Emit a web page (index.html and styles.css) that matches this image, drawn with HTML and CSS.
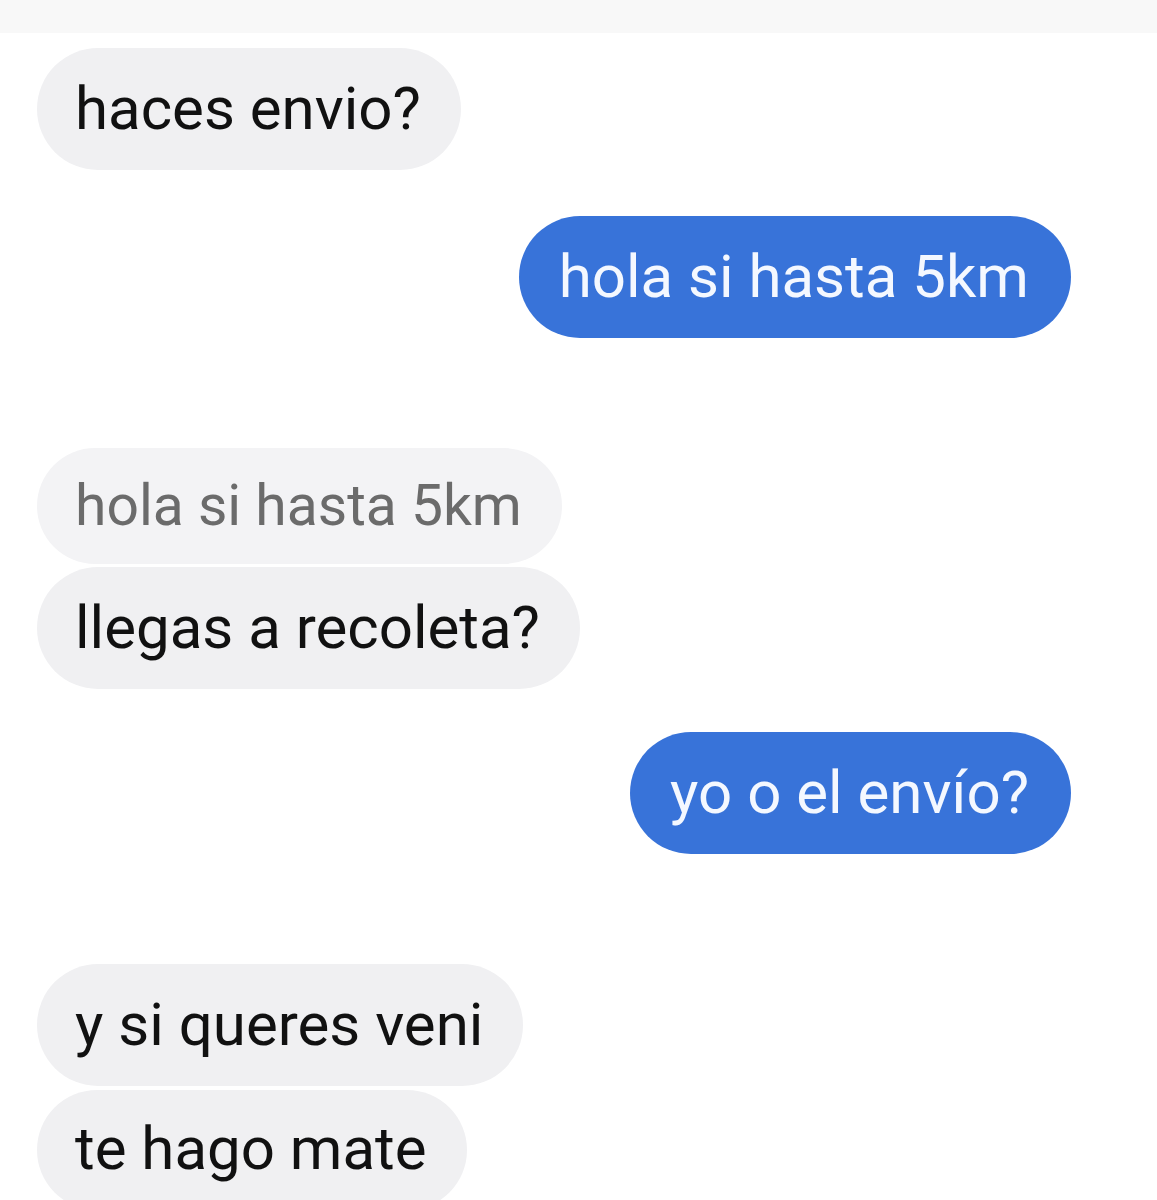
FILE: index.html
```html
<!doctype html>
<html>
<head lang='es'>
  <meta charset='utf-8'>
  <meta name='viewport' content='width=device-width'>
  <title>Chat</title>
  <link rel="stylesheet" href="styles.css">
</head>
<body>
<div class="topbar"></div>
<div class="thread">
  <div class="group group--in group--first">
    <div class="bubble bubble--in">haces envio?</div>
  </div>

  <div class="group group--out">
    <div class="bubble bubble--out">hola si hasta 5km</div>
  </div>

  <div class="group group--in group--far">
    <div class="bubble bubble--quote">hola si hasta 5km</div>
    <div class="bubble bubble--in bubble--reply">llegas a recoleta?</div>
  </div>

  <div class="group group--out group--close">
    <div class="bubble bubble--out">yo o el envío?</div>
  </div>

  <div class="group group--in group--far group--tight">
    <div class="bubble bubble--in">y si queres veni</div>
    <div class="bubble bubble--in">te hago mate</div>
  </div>
</div>
</body>
</html>
```

FILE: styles.css
```css
html, body, div {
  margin: 0;
  padding: 0;
}

html {
  box-sizing: border-box;
}

*, *:before, *:after {
  box-sizing: inherit;
}

body {
  background: #fff;
  font-family: Roboto, 'Noto Sans', sans-serif;
  color: #111;
  overflow: hidden;
}

.topbar {
  height: 33px;
  background: #f8f8f8;
}

.thread {
  display: flex;
  flex-direction: column;
  padding: 0 86px 0 37px;
}

.group {
  display: flex;
  flex-direction: column;
  gap: 8px;
  margin-top: 46px;
}

.group--first {
  margin-top: 15px;
}

.group--far {
  margin-top: 110px;
}

.group--close {
  margin-top: 43px;
}

.group--tight {
  gap: 4px;
}

.group--in {
  align-items: flex-start;
}

.group--out {
  align-items: flex-end;
}

.bubble {
  font-size: 60px;
  line-height: 68px;
  padding: 27px 40px 27px 38px;
  border-radius: 61px;
  white-space: nowrap;
}

.bubble--in {
  background: #f0f0f2;
}

.bubble--out {
  background: #3873d9;
  color: #f4f8ff;
  padding-left: 40px;
  padding-right: 42px;
}

.bubble--quote {
  background: #f3f3f5;
  color: #6b6b6b;
  font-size: 57px;
  padding-top: 24px;
  padding-bottom: 24px;
  border-radius: 58px;
}

.group--far .bubble--reply {
  margin-top: -5px;
}

.group--tight .bubble:last-child {
  padding-top: 25px;
}
```
